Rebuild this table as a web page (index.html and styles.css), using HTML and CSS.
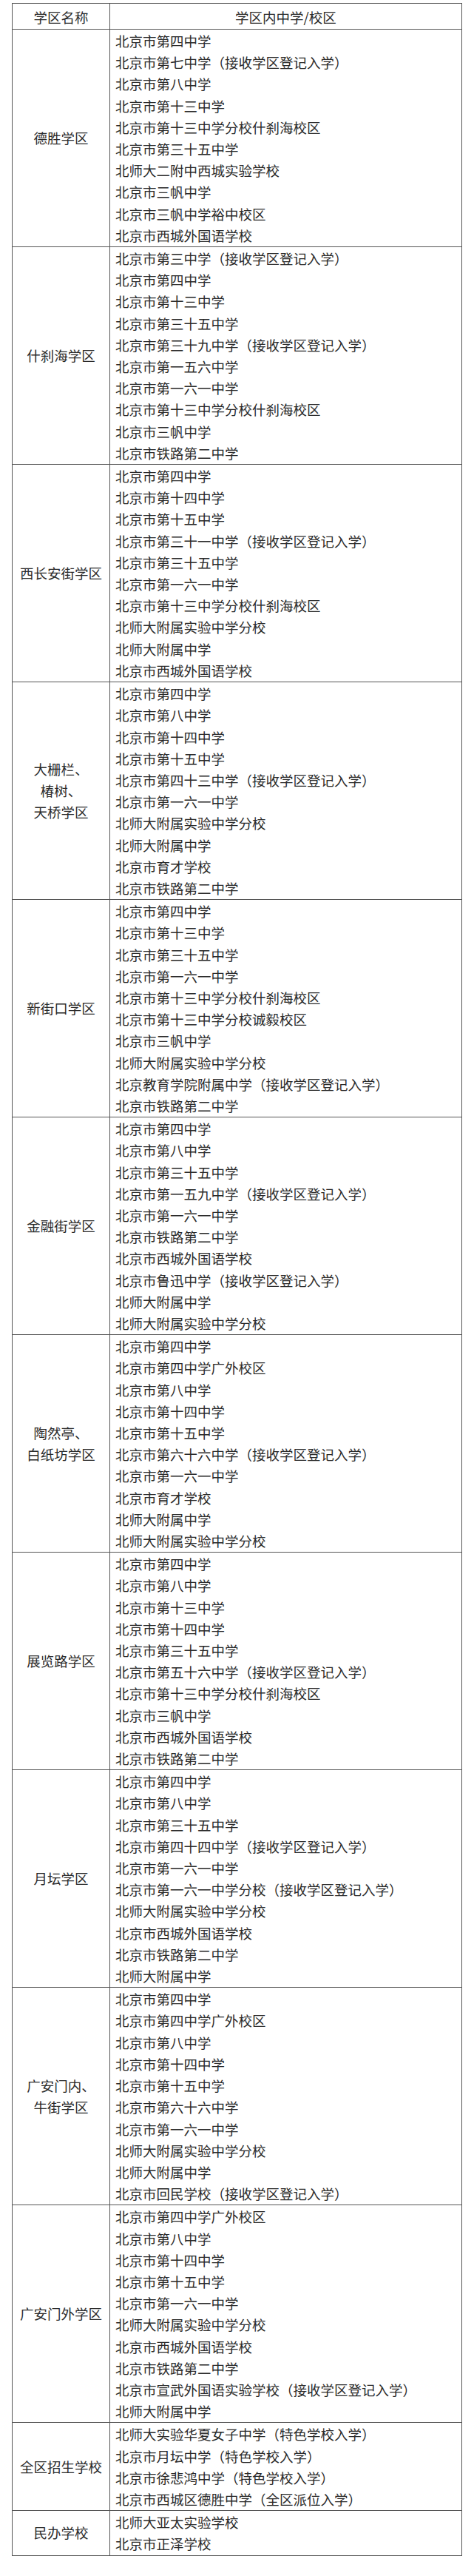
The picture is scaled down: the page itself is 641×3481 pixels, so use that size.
FILE: index.html
```html
<!DOCTYPE html>
<html lang="zh-CN">
<head>
<meta charset="utf-8">
<title>西城区学区内中学/校区</title>
<link rel="stylesheet" href="styles.css">
</head>
<body>
<table class="districts">
  <colgroup><col class="col-name"><col class="col-schools"></colgroup>
  <thead>
    <tr><th>学区名称</th><th>学区内中学/校区</th></tr>
  </thead>
  <tbody>
    <tr>
      <td class="name">德胜学区</td>
      <td class="schools">
        <div>北京市第四中学</div>
        <div>北京市第七中学（接收学区登记入学）</div>
        <div>北京市第八中学</div>
        <div>北京市第十三中学</div>
        <div>北京市第十三中学分校什刹海校区</div>
        <div>北京市第三十五中学</div>
        <div>北师大二附中西城实验学校</div>
        <div>北京市三帆中学</div>
        <div>北京市三帆中学裕中校区</div>
        <div>北京市西城外国语学校</div>
      </td>
    </tr>
    <tr>
      <td class="name">什刹海学区</td>
      <td class="schools">
        <div>北京市第三中学（接收学区登记入学）</div>
        <div>北京市第四中学</div>
        <div>北京市第十三中学</div>
        <div>北京市第三十五中学</div>
        <div>北京市第三十九中学（接收学区登记入学）</div>
        <div>北京市第一五六中学</div>
        <div>北京市第一六一中学</div>
        <div>北京市第十三中学分校什刹海校区</div>
        <div>北京市三帆中学</div>
        <div>北京市铁路第二中学</div>
      </td>
    </tr>
    <tr>
      <td class="name">西长安街学区</td>
      <td class="schools">
        <div>北京市第四中学</div>
        <div>北京市第十四中学</div>
        <div>北京市第十五中学</div>
        <div>北京市第三十一中学（接收学区登记入学）</div>
        <div>北京市第三十五中学</div>
        <div>北京市第一六一中学</div>
        <div>北京市第十三中学分校什刹海校区</div>
        <div>北师大附属实验中学分校</div>
        <div>北师大附属中学</div>
        <div>北京市西城外国语学校</div>
      </td>
    </tr>
    <tr>
      <td class="name">大栅栏、<br>椿树、<br>天桥学区</td>
      <td class="schools">
        <div>北京市第四中学</div>
        <div>北京市第八中学</div>
        <div>北京市第十四中学</div>
        <div>北京市第十五中学</div>
        <div>北京市第四十三中学（接收学区登记入学）</div>
        <div>北京市第一六一中学</div>
        <div>北师大附属实验中学分校</div>
        <div>北师大附属中学</div>
        <div>北京市育才学校</div>
        <div>北京市铁路第二中学</div>
      </td>
    </tr>
    <tr>
      <td class="name">新街口学区</td>
      <td class="schools">
        <div>北京市第四中学</div>
        <div>北京市第十三中学</div>
        <div>北京市第三十五中学</div>
        <div>北京市第一六一中学</div>
        <div>北京市第十三中学分校什刹海校区</div>
        <div>北京市第十三中学分校诚毅校区</div>
        <div>北京市三帆中学</div>
        <div>北师大附属实验中学分校</div>
        <div>北京教育学院附属中学（接收学区登记入学）</div>
        <div>北京市铁路第二中学</div>
      </td>
    </tr>
    <tr>
      <td class="name">金融街学区</td>
      <td class="schools">
        <div>北京市第四中学</div>
        <div>北京市第八中学</div>
        <div>北京市第三十五中学</div>
        <div>北京市第一五九中学（接收学区登记入学）</div>
        <div>北京市第一六一中学</div>
        <div>北京市铁路第二中学</div>
        <div>北京市西城外国语学校</div>
        <div>北京市鲁迅中学（接收学区登记入学）</div>
        <div>北师大附属中学</div>
        <div>北师大附属实验中学分校</div>
      </td>
    </tr>
    <tr>
      <td class="name">陶然亭、<br>白纸坊学区</td>
      <td class="schools">
        <div>北京市第四中学</div>
        <div>北京市第四中学广外校区</div>
        <div>北京市第八中学</div>
        <div>北京市第十四中学</div>
        <div>北京市第十五中学</div>
        <div>北京市第六十六中学（接收学区登记入学）</div>
        <div>北京市第一六一中学</div>
        <div>北京市育才学校</div>
        <div>北师大附属中学</div>
        <div>北师大附属实验中学分校</div>
      </td>
    </tr>
    <tr>
      <td class="name">展览路学区</td>
      <td class="schools">
        <div>北京市第四中学</div>
        <div>北京市第八中学</div>
        <div>北京市第十三中学</div>
        <div>北京市第十四中学</div>
        <div>北京市第三十五中学</div>
        <div>北京市第五十六中学（接收学区登记入学）</div>
        <div>北京市第十三中学分校什刹海校区</div>
        <div>北京市三帆中学</div>
        <div>北京市西城外国语学校</div>
        <div>北京市铁路第二中学</div>
      </td>
    </tr>
    <tr>
      <td class="name">月坛学区</td>
      <td class="schools">
        <div>北京市第四中学</div>
        <div>北京市第八中学</div>
        <div>北京市第三十五中学</div>
        <div>北京市第四十四中学（接收学区登记入学）</div>
        <div>北京市第一六一中学</div>
        <div>北京市第一六一中学分校（接收学区登记入学）</div>
        <div>北师大附属实验中学分校</div>
        <div>北京市西城外国语学校</div>
        <div>北京市铁路第二中学</div>
        <div>北师大附属中学</div>
      </td>
    </tr>
    <tr>
      <td class="name">广安门内、<br>牛街学区</td>
      <td class="schools">
        <div>北京市第四中学</div>
        <div>北京市第四中学广外校区</div>
        <div>北京市第八中学</div>
        <div>北京市第十四中学</div>
        <div>北京市第十五中学</div>
        <div>北京市第六十六中学</div>
        <div>北京市第一六一中学</div>
        <div>北师大附属实验中学分校</div>
        <div>北师大附属中学</div>
        <div>北京市回民学校（接收学区登记入学）</div>
      </td>
    </tr>
    <tr>
      <td class="name">广安门外学区</td>
      <td class="schools">
        <div>北京市第四中学广外校区</div>
        <div>北京市第八中学</div>
        <div>北京市第十四中学</div>
        <div>北京市第十五中学</div>
        <div>北京市第一六一中学</div>
        <div>北师大附属实验中学分校</div>
        <div>北京市西城外国语学校</div>
        <div>北京市铁路第二中学</div>
        <div>北京市宣武外国语实验学校（接收学区登记入学）</div>
        <div>北师大附属中学</div>
      </td>
    </tr>
    <tr>
      <td class="name">全区招生学校</td>
      <td class="schools">
        <div>北师大实验华夏女子中学（特色学校入学）</div>
        <div>北京市月坛中学（特色学校入学）</div>
        <div>北京市徐悲鸿中学（特色学校入学）</div>
        <div>北京市西城区德胜中学（全区派位入学）</div>
      </td>
    </tr>
    <tr>
      <td class="name">民办学校</td>
      <td class="schools">
        <div>北师大亚太实验学校</div>
        <div>北京市正泽学校</div>
      </td>
    </tr>
  </tbody>
</table>
</body>
</html>
```
FILE: styles.css
```css
html, body {
  margin: 0;
  padding: 0;
  background: #ffffff;
}
body {
  font-family: "Noto Sans CJK SC", "Noto Sans", sans-serif;
  color: #2a2a2a;
  font-size: 18.5px;
}
.districts {
  border-collapse: collapse;
  table-layout: fixed;
  width: 609px;
  margin: 4px 0 0 16px;
}
.col-name { width: 132px; }
.districts th,
.districts td {
  border: 1px solid #555555;
  padding: 0;
}
.districts th {
  font-weight: normal;
  text-align: center;
  line-height: 29px;
  padding-top: 4px;
  padding-bottom: 1px;
}
.districts td.name {
  text-align: center;
  vertical-align: middle;
  line-height: 29.2px;
  padding: 0 2px;
}
.districts td.schools {
  vertical-align: top;
  line-height: 29.2px;
  padding: 1px 0 0 7px;
  white-space: nowrap;
}
```
